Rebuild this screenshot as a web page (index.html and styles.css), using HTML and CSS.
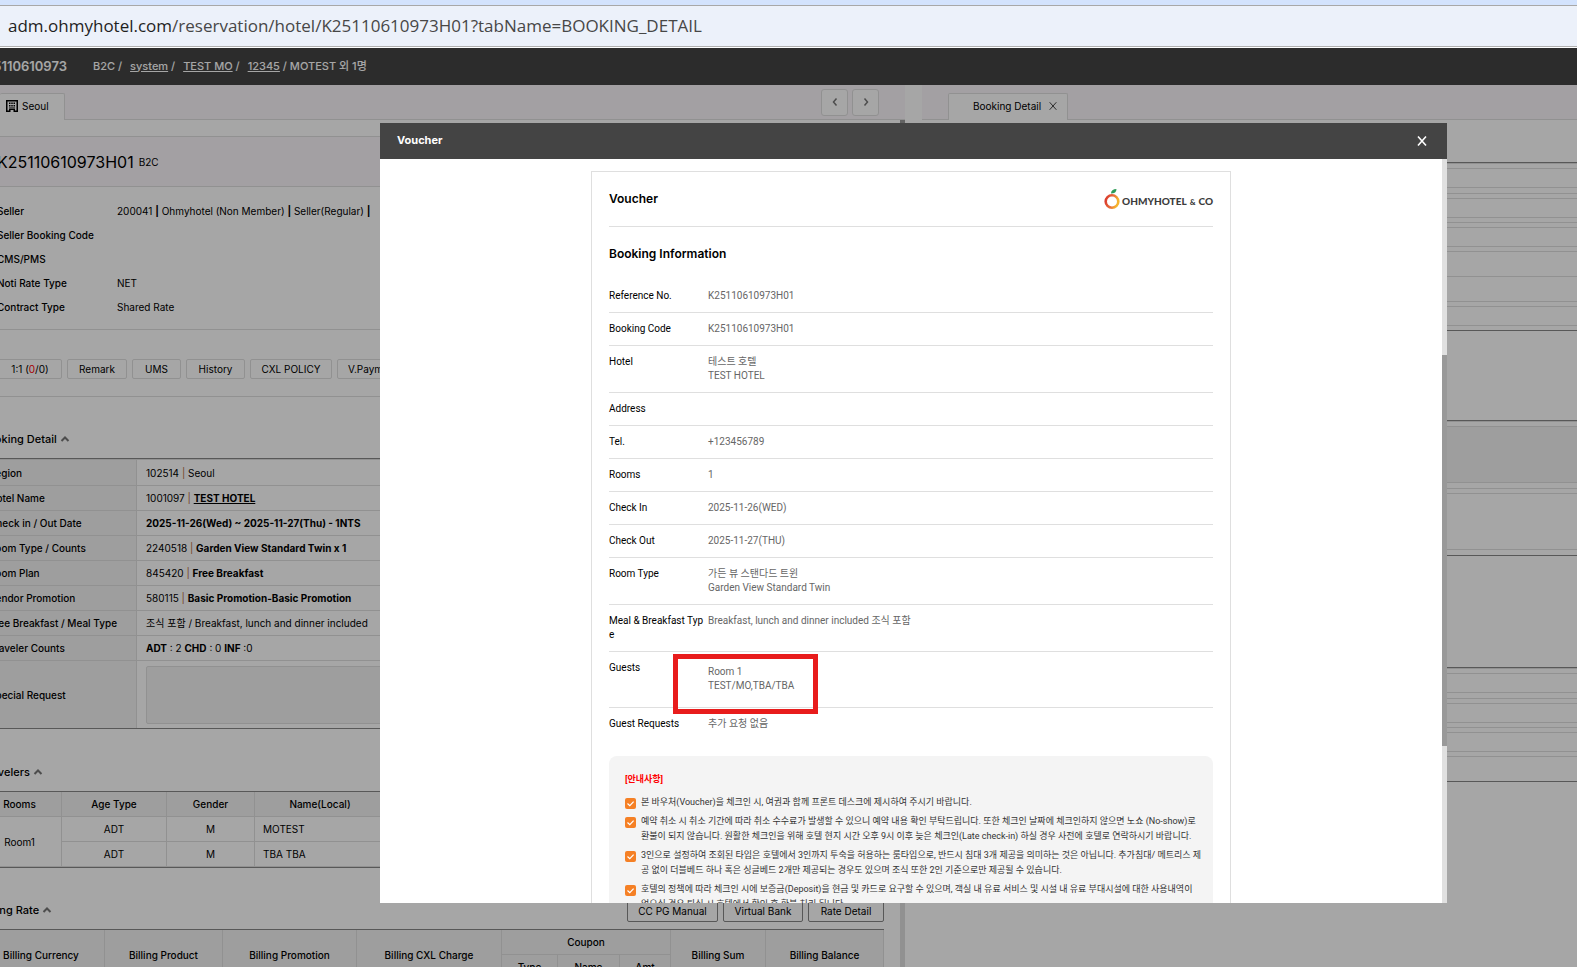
FILE: index.html
```html
<!DOCTYPE html>
<html lang="ko">
<head>
<meta charset="utf-8">
<title>Booking Detail - Voucher</title>
<link rel="stylesheet" href="styles.css">
</head>
<body>
<svg class="defs" aria-hidden="true">
  <symbol id="chev-up" viewBox="0 0 10 8"><path d="M1.5 6 5 2.5 8.5 6" fill="none" stroke="currentColor" stroke-width="2"/></symbol>
  <symbol id="check" viewBox="0 0 11 11"><rect width="11" height="11" rx="2" fill="#f58025"/><path d="M2.5 5.5 4.8 7.7 8.6 3.6" fill="none" stroke="#fff" stroke-width="1.2"/></symbol>
  <symbol id="cross" viewBox="0 0 12 12"><path d="M2 1.500 10 10.500M10 1.500 2 10.500" fill="none" stroke="currentColor" stroke-width="var(--sw,1.200)"/></symbol>
</svg>
<div class="browser-bar"><span class="host">adm.ohmyhotel.com</span>/reservation/hotel/K25110610973H01?tabName=BOOKING_DETAIL</div>
<div class="app">
  <header class="topbar">
    <strong class="booking-no">K25110610973</strong>
    <nav class="crumbs"><span>B2C /</span><span><a href="#">system</a> /</span><span><a href="#">TEST MO</a> /</span><span><a href="#">12345</a> / MOTEST 외 1명</span></nav>
  </header>
  <main class="panes">
    <section class="pane left">
      <div class="tabs">
        <button class="tab seoul"><svg width="12" height="12" viewBox="0 0 12 12"><path fill="#000" fill-rule="evenodd" d="M0 0h12v12H7.500V10h-3v2H0zM1.500 1.500v9h1.500V9h6v1.500h1.500v-9z"/><path d="M3 2.500h1.500V4H3zM5.250 2.500h1.500V4h-1.500zM7.500 2.500H9V4H7.500zM3 5h1.500v1.500H3zM5.250 5h1.500v1.500h-1.500zM7.500 5H9v1.500H7.500zM3 7.500h6v1H3z"/></svg>Seoul</button>
        <div class="pager">
          <button aria-label="Previous"><svg width="8" height="10" viewBox="0 0 8 10"><path d="M5.500 1.500 2.500 5l3 3.500" fill="none" stroke="#777" stroke-width="1.500"/></svg></button>
          <button aria-label="Next"><svg width="8" height="10" viewBox="0 0 8 10"><path d="M2.500 1.500 5.500 5l-3 3.500" fill="none" stroke="#777" stroke-width="1.500"/></svg></button>
        </div>
      </div>
      <div class="pane-body">
        <div class="sheet">
          <div class="id-band"><h1>K25110610973H01</h1><span>B2C</span></div>
          <dl class="facts">
            <dt>Seller</dt><dd>200041 <b>|</b> Ohmyhotel (Non Member) <b>|</b> Seller(Regular) <b>|</b></dd>
            <dt>Seller Booking Code</dt><dd></dd>
            <dt>CMS/PMS</dt><dd></dd>
            <dt>Noti Rate Type</dt><dd>NET</dd>
            <dt>Contract Type</dt><dd>Shared Rate</dd>
          </dl>
          <div class="actions">
            <button class="b-first">1:1 (<em>0</em>/0)</button><button class="b-remark">Remark</button><button class="b-ums">UMS</button><button class="b-hist">History</button><button class="b-cxl">CXL POLICY</button><button class="b-pay">V.Payment</button>
          </div>
          <h2 class="sec-detail">Booking Detail <svg width="10" height="8"><use href="#chev-up"/></svg></h2>
          <table class="detail">
            <tr><th scope="row">Region</th><td>102514 <i>|</i> Seoul</td></tr>
            <tr><th scope="row">Hotel Name</th><td>1001097 <i>|</i> <a href="#">TEST HOTEL</a></td></tr>
            <tr><th scope="row">Check in / Out Date</th><td><b>2025-11-26(Wed) ~ 2025-11-27(Thu) - 1NTS</b></td></tr>
            <tr><th scope="row">Room Type / Counts</th><td>2240518 <i>|</i> <b>Garden View Standard Twin x 1</b></td></tr>
            <tr><th scope="row">Room Plan</th><td>845420 <i>|</i> <b>Free Breakfast</b></td></tr>
            <tr><th scope="row">Vendor Promotion</th><td>580115 <i>|</i> <b>Basic Promotion-Basic Promotion</b></td></tr>
            <tr><th scope="row">Free Breakfast / Meal Type</th><td>조식 포함 / Breakfast, lunch and dinner included</td></tr>
            <tr><th scope="row">Traveler Counts</th><td><b>ADT</b> : 2 <b>CHD</b> : 0 <b>INF</b> :0</td></tr>
            <tr><th scope="row"><label for="special">Special Request</label></th><td><textarea id="special" readonly></textarea></td></tr>
          </table>
          <h2 class="sec-travelers">Travelers <svg width="10" height="8"><use href="#chev-up"/></svg></h2>
          <table class="grid travelers">
            <colgroup><col class="c-rooms"><col class="c-age"><col class="c-gender"><col class="c-name"><col></colgroup>
            <tr><th>Rooms</th><th>Age Type</th><th>Gender</th><th>Name(Local)</th><th></th></tr>
            <tr><td rowspan="2">Room1</td><td>ADT</td><td>M</td><td class="name">MOTEST</td><td></td></tr>
            <tr><td>ADT</td><td>M</td><td class="name">TBA TBA</td><td></td></tr>
          </table>
          <div class="rate-head">
            <h2>Billing Rate <svg width="10" height="8"><use href="#chev-up"/></svg></h2>
            <div class="rate-actions"><button class="r-cc">CC PG Manual</button><button class="r-vb">Virtual Bank</button><button class="r-rd">Rate Detail</button></div>
          </div>
          <table class="grid billing">
            <colgroup><col class="c1"><col class="c2"><col class="c3"><col class="c4"><col class="c5"><col class="c6"><col class="c7"><col class="c8"><col></colgroup>
            <tr><th rowspan="2">Billing Currency</th><th rowspan="2">Billing Product</th><th rowspan="2">Billing Promotion</th><th rowspan="2">Billing CXL Charge</th><th colspan="3">Coupon</th><th rowspan="2">Billing Sum</th><th rowspan="2">Billing Balance</th></tr>
            <tr><th>Type</th><th>Name</th><th>Amt</th></tr>
          </table>
        </div>
        <div class="track"><div class="thumb"></div></div>
      </div>
    </section>
    <section class="pane right">
      <div class="tabs"><button class="tab detail-tab">Booking Detail <svg width="10" height="10"><use href="#cross"/></svg></button></div>
      <div class="form a"><div class="row"><div class="box"></div></div><div class="row"><div class="box"></div></div><div class="row"><div class="box"></div></div><div class="row"></div><div class="row"></div><div class="row"><div class="box"></div></div></div>
      <div class="form b"><div class="row"><div class="box tall filled"></div></div><div class="row"><div class="box tall"></div></div></div>
      <div class="form c"><div class="row"><div class="box"></div></div><div class="row"><div class="box"></div></div><div class="row"><div class="box"></div></div><div class="row"></div></div>
    </section>
  </main>
  <div class="overlay">
    <div class="modal" role="dialog" aria-label="Voucher">
      <div class="modal-head"><span>Voucher</span><button aria-label="Close"><svg width="12" height="12"><use href="#cross"/></svg></button></div>
      <div class="modal-body">
        <div class="scroller">
          <article class="voucher">
            <div class="v-head"><h3>Voucher</h3>
              <div class="logo"><svg width="17" height="22" viewBox="0 0 17 22"><defs><linearGradient id="og" x1="0" y1="0" x2="1" y2="0.300"><stop offset="0" stop-color="#d8342c"/><stop offset=".6" stop-color="#e8703a"/><stop offset="1" stop-color="#f5b32c"/></linearGradient></defs><circle cx="8" cy="13.500" r="6.300" fill="none" stroke="url(#og)" stroke-width="2.600"/><path d="M7 5.500C7 2.500 9 1 12.500 1 12.500 4 10.500 5.500 7 5.500z" fill="#2c9c57"/></svg><span>OHMYHOTEL<small>&amp;</small>CO</span></div>
            </div>
            <h4>Booking Information</h4>
            <table class="info">
              <tr><th scope="row">Reference No.</th><td>K25110610973H01</td></tr>
              <tr><th scope="row">Booking Code</th><td>K25110610973H01</td></tr>
              <tr><th scope="row">Hotel</th><td>테스트 호텔<br>TEST HOTEL</td></tr>
              <tr><th scope="row">Address</th><td></td></tr>
              <tr><th scope="row">Tel.</th><td>+123456789</td></tr>
              <tr><th scope="row">Rooms</th><td>1</td></tr>
              <tr><th scope="row">Check In</th><td>2025-11-26(WED)</td></tr>
              <tr><th scope="row">Check Out</th><td>2025-11-27(THU)</td></tr>
              <tr><th scope="row">Room Type</th><td>가든 뷰 스탠다드 트윈<br>Garden View Standard Twin</td></tr>
              <tr><th scope="row">Meal &amp; Breakfast Type</th><td>Breakfast, lunch and dinner included 조식 포함</td></tr>
              <tr><th scope="row">Guests</th><td><div class="guests">Room 1<br>TEST/MO,TBA/TBA<span class="marker"></span></div></td></tr>
              <tr><th scope="row">Guest Requests</th><td>추가 요청 없음</td></tr>
            </table>
            <div class="notice">
              <h5>[안내사항]</h5>
              <ul>
                <li><svg width="11" height="11"><use href="#check"/></svg><p>본 바우처(Voucher)을 체크인 시, 여권과 함께 프론트 데스크에 제시하여 주시기 바랍니다.</p></li>
                <li><svg width="11" height="11"><use href="#check"/></svg><p>예약 취소 시 취소 기간에 따라 취소 수수료가 발생할 수 있으니 예약 내용 확인 부탁드립니다. 또한 체크인 날짜에 체크인하지 않으면 노쇼 (No-show)로<br>환불이 되지 않습니다. 원활한 체크인을 위해 호텔 현지 시간 오후 9시 이후 늦은 체크인(Late check-in) 하실 경우 사전에 호텔로 연락하시기 바랍니다.</p></li>
                <li><svg width="11" height="11"><use href="#check"/></svg><p>3인으로 설정하여 조회된 타입은 호텔에서 3인까지 투숙을 허용하는 룸타입으로, 반드시 침대 3개 제공을 의미하는 것은 아닙니다. 추가침대/ 메트리스 제<br>공 없이 더블베드 하나 혹은 싱글베드 2개만 제공되는 경우도 있으며 조식 또한 2인 기준으로만 제공될 수 있습니다.</p></li>
                <li><svg width="11" height="11"><use href="#check"/></svg><p>호텔의 정책에 따라 체크인 시에 보증금(Deposit)을 현금 및 카드로 요구할 수 있으며, 객실 내 유료 서비스 및 시설 내 유료 부대시설에 대한 사용내역이<br>없으실 경우 퇴실 시 호텔에서 확인 후 환불 처리 됩니다.</p></li>
              </ul>
            </div>
          </article>
        </div>
        <div class="m-track"><div class="m-thumb"></div></div>
      </div>
    </div>
  </div>
</div>
</body>
</html>
```

FILE: styles.css
```css
* { box-sizing: border-box; margin: 0; padding: 0; }
body { height: 100vh; display: flex; flex-direction: column; overflow: hidden; font: 10px/16px Inter, "Noto Sans CJK KR", sans-serif; color: #000; background: #fff; }
button { font: inherit; color: inherit; }
a { color: inherit; }
.defs { display: none; }
.browser-bar { flex: none; height: 48px; padding: 0 8px; border-top: 5px solid #d3e3fd; border-bottom: 1px solid #fff; background: #ecf1fa; box-shadow: inset 0 1px #a8a8a8, inset 0 -1px #b0b0b0; font: 17px/42px "Open Sans", "Noto Sans", sans-serif; color: #474747; white-space: nowrap; }
.host { color: #1f1f1f; }
.app { flex: 1; min-height: 0; position: relative; display: flex; flex-direction: column; }
.topbar { flex: none; height: 37px; padding-bottom: 2px; background: #444; color: #fff; display: flex; align-items: center; font-size: 11px; font-weight: 500; }
.booking-no { width: 117px; margin-left: -24px; font-size: 13px; font-weight: 600; }
.crumbs { display: flex; gap: 8px; white-space: nowrap; }
.panes { flex: 1; min-height: 0; display: flex; }
.pane { min-width: 0; display: flex; flex-direction: column; overflow: hidden; }
.left { flex: 0 0 905px; margin-right: 17px; }
.right { flex: 1; }
.tabs { flex: none; height: 35px; background: #faf6fa; border-bottom: 1px solid #dfdfdf; display: flex; align-items: flex-end; justify-content: space-between; }
.tab { height: 27px; margin-bottom: -1px; padding-bottom: 2px; border: 1px solid #dfdfdf; border-bottom: 0; border-radius: 2px 2px 0 0; background: #fff; display: flex; align-items: center; white-space: nowrap; }
.seoul { width: 65px; padding-left: 6px; gap: 4px; border-left: 0; }
.detail-tab { width: 120px; margin-left: 26px; gap: 7px; padding-left: 24px; color: #000; }
.detail-tab svg { color: #444; }
.pager { display: flex; gap: 4px; margin-right: 26px; align-self: flex-start; padding-top: 4px; }
.pager button { width: 27px; height: 27px; padding-bottom: 2px; border: 1px solid #dfdfdf; border-radius: 3px; background: #fff; display: grid; place-items: center; }
.pane-body { flex: 1; min-height: 0; display: flex; justify-content: space-between; overflow: hidden; }
.track { flex: 0 0 5px; background: #dfdfdf; }
.thumb { height: 680px; background: #999; }
.sheet { flex: 1; min-width: 0; margin: 16px 16px 0 -22px; }
.id-band { height: 51px; padding-left: 18px; border: 1px solid #dfdfdf; background: #faf6fa; display: flex; align-items: center; gap: 5px; }
.id-band h1 { font-size: 16px; font-weight: 400; }
.facts { height: 143px; padding: 12px 0 0 19px; border-bottom: 1px solid #dfdfdf; display: grid; grid-template-columns: 120px 1fr; grid-auto-rows: 24px; align-items: center; white-space: nowrap; }
.facts dt { font-weight: 500; }
.actions { height: 67px; border-bottom: 1px solid #dfdfdf; padding-top: 29px; display: flex; gap: 5px; }
.actions button { height: 20px; border: 1px solid #dfdfdf; border-radius: 2px; background: #fff; line-height: 16px; white-space: nowrap; }
.actions em { font-style: normal; color: #f00; }
.actions .b-first { width: 84px; padding-left: 20px; }
.b-remark { width: 60px; }
.b-ums { width: 49px; }
.b-hist { width: 59px; }
.b-cxl { width: 82px; }
.b-pay { width: 72px; }
h2 { padding-left: 3px; font-size: 11px; font-weight: 500; line-height: 16px; white-space: nowrap; }
h2 svg { color: #777; }
.sec-detail { padding: 34px 0 11px 3px; }
table { width: 100%; border-collapse: separate; border-spacing: 0; }
.detail { border-top: 1px solid #888; border-bottom: 1px solid #888; }
.detail th, .detail td { height: 25px; border-top: 1px solid #dfdfdf; white-space: nowrap; }
.detail tr:first-child > * { height: 26px; }
.detail th { width: 159px; padding-left: 11px; background: #f3f3f3; border-right: 1px solid #dfdfdf; font-weight: 500; text-align: left; }
.detail td { padding-left: 9px; }
.detail i { font-style: normal; color: #b06a40; }
.detail a, .detail b { font-weight: 700; }
.detail tr:last-child > * { height: 68px; }
.detail textarea { display: block; width: 100%; height: 58px; border: 1px solid #dfdfdf; border-radius: 2px; background: #f3f3f3; resize: none; }
.sec-travelers { padding: 35px 0 11px 3px; }
.grid { table-layout: fixed; border-top: 1px solid #888; border-bottom: 1px solid #888; }
.grid th, .grid td { height: 25px; border-right: 1px solid #dfdfdf; border-bottom: 1px solid #dfdfdf; text-align: center; white-space: nowrap; }
.grid th { background: #f3f3f3; font-weight: 500; }
.grid td.name { text-align: left; padding-left: 8px; }
.c-rooms { width: 84px; }
.c-age { width: 105px; }
.c-gender { width: 88px; }
.c-name { width: 131px; }
.rate-head { display: flex; justify-content: space-between; align-items: flex-end; padding: 32px 0 7px; }
.rate-head h2 { padding-bottom: 4px; }
.rate-actions { display: flex; gap: 5px; }
.rate-actions button { height: 22px; border: 1px solid #888; border-radius: 2px; background: #fff; white-space: nowrap; }
.r-cc { width: 91px; }
.r-vb { width: 80px; }
.r-rd { width: 76px; }
.c1 { width: 127px; }
.c2 { width: 118px; }
.c3 { width: 134px; }
.c4 { width: 145px; }
.c5 { width: 56px; }
.c6 { width: 62px; }
.c7 { width: 51px; }
.c8 { width: 95px; }
.form { flex: none; border-top: 1px solid #888; border-bottom: 1px solid #888; }
.a { margin-top: 42px; }
.b { margin-top: 89px; }
.c { margin-top: 111px; }
.row { min-height: 25px; border-top: 1px solid #dfdfdf; padding: 4px 0; }
.form .row:first-child { padding-bottom: 5px; }
.b .row { padding-bottom: 5px; }
.box { height: 20px; border: 1px solid #dfdfdf; border-width: 1px 0; }
.tall { height: 57px; }
.filled { background: #f3f3f3; }
.overlay { position: absolute; inset: 0; display: flex; padding: 75px 130px 64px 380px; background: rgba(0, 0, 0, .35); }
.modal { flex: 1; min-width: 0; display: flex; flex-direction: column; background: #fff; }
.modal-head { flex: none; height: 36px; padding: 0 19px 0 17px; background: #444; color: #fff; display: flex; align-items: center; justify-content: space-between; font-size: 11px; font-weight: 700; }
.modal-head span { padding-bottom: 2px; }
.modal-head button { width: 12px; height: 12px; border: 0; background: none; --sw: 1.6; }
.modal-head svg { display: block; }
.modal-body { flex: 1; min-height: 0; display: flex; }
.scroller { flex: 1; overflow: hidden; padding-top: 12px; }
.m-track { flex: 0 0 5px; background: #e0e0e0; padding-top: 196px; }
.m-thumb { height: 391px; background: #999; }
.voucher { width: 640px; margin: 0 auto; padding: 0 17px; border: 1px solid #dfdfdf; line-height: 14px; }
.v-head { height: 55px; border-bottom: 1px solid #dfdfdf; display: flex; align-items: center; justify-content: space-between; }
h3 { font-size: 12px; font-weight: 600; }
h4 { font-size: 12px; font-weight: 600; line-height: 16px; padding: 19px 0 18px; }
.logo { display: flex; align-items: center; gap: 1px; color: #3c3c3c; font: 900 10px/14px Lato, sans-serif; }
.logo span { padding-top: 4px; }
.logo small { font-size: 8px; padding: 0 3px; }
.info { table-layout: fixed; }
.info th, .info td { padding: 9px 0; vertical-align: top; text-align: left; border-bottom: 1px solid #dfdfdf; font-family: Roboto, "Noto Sans CJK KR", sans-serif; font-weight: 400; line-height: 14px; }
.info th { width: 99px; color: #000; }
.info th { padding-right: 4px; word-break: break-all; }
.info td { color: #666; }
.info tr:last-child > * { border-bottom: 0; }
.guests { position: relative; padding: 4px 0 5px; }
.marker { position: absolute; left: -35px; top: -7px; width: 145px; height: 60px; border: 5px solid #e81c1c; }
.notice { margin-top: 16px; padding: 16px; border-radius: 8px; background: #f4f4f4; color: #333; font: 9px/15px Roboto, "Noto Sans CJK KR", sans-serif; }
h5 { color: #f00; font-size: 9px; font-weight: 700; line-height: 14px; margin-bottom: 9px; }
.notice ul { list-style: none; display: grid; gap: 4px; }
.notice li { display: flex; gap: 5px; white-space: nowrap; }
.notice svg { flex: none; margin-top: 3px; }
```
